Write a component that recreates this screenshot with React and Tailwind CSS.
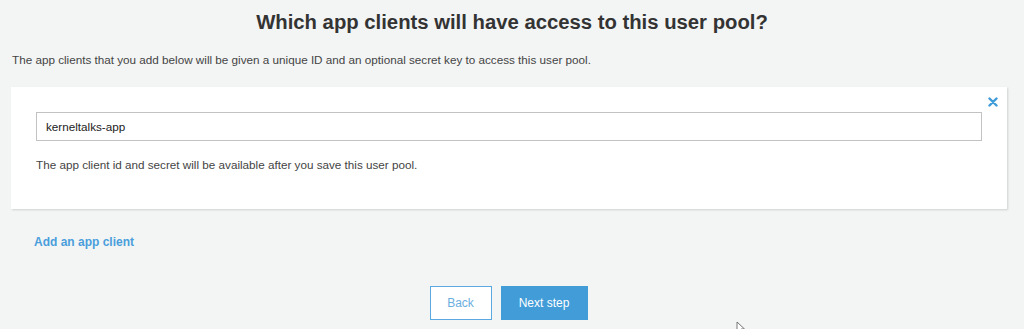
import React from 'react'

const App = () => {
  return (
    <div className="relative w-[1024px] h-[329px] overflow-hidden bg-[#f3f5f5] font-['Liberation_Sans',Arial,sans-serif] text-[#444]">
      <h1 className="pt-[10px] text-center text-[20.3px] leading-[24px] font-bold text-[#333]">
        Which app clients will have access to this user pool?
      </h1>
      <p className="mt-[19px] pl-[12px] text-[11.7px] leading-[14px] text-[#444]">
        The app clients that you add below will be given a unique ID and an optional secret key to access this user pool.
      </p>

      <div className="relative mt-[20px] ml-[11px] w-[996px] h-[122px] bg-white shadow-[1px_1px_2px_rgba(0,0,0,0.15)] px-[25px] pt-[25px]">
        <button className="absolute right-[9px] top-[10px] text-[#3f9bd8]">
          <svg width="10" height="10" viewBox="0 0 10 10">
            <path d="M1.5 1.5 L8.5 8.5 M8.5 1.5 L1.5 8.5" stroke="currentColor" strokeWidth="2.4" strokeLinecap="round" />
          </svg>
        </button>
        <div className="w-[946px] h-[29px] border border-[#c2c2c2] flex items-center px-[9px] text-[11.7px] text-[#222]">
          kerneltalks-app
        </div>
        <p className="mt-[17px] text-[11.7px] leading-[14px] text-[#444]">
          The app client id and secret will be available after you save this user pool.
        </p>
      </div>

      <div className="mt-[26px] pl-[34px]">
        <a className="block text-[12px] leading-[14px] font-bold text-[#4a9edb]">Add an app client</a>
      </div>

      <div className="mt-[37px] flex justify-center gap-[9px] pr-[7px]">
        <button className="w-[62px] h-[34px] bg-white border border-[#5aa9e0] text-[12px] text-[#6aaee0]">
          Back
        </button>
        <button className="w-[87px] h-[34px] bg-[#429cd8] text-[12px] text-white">
          Next step
        </button>
      </div>

      <svg className="absolute left-[736px] top-[321px]" width="10" height="12" viewBox="0 0 10 12">
        <path d="M1 1 L1 11 L3.5 8.5 L5.5 12 L7 11.3 L5 8 L8.5 8 Z" fill="#fff" stroke="#555" strokeWidth="0.8" />
      </svg>
    </div>
  )
}

export default App
